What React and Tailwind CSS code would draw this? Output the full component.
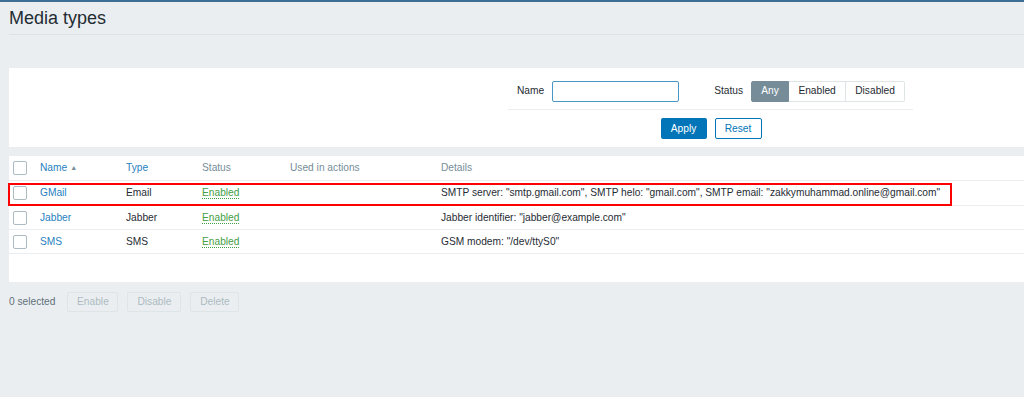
import React from 'react';

const rows = [
  { name: 'GMail', type: 'Email', details: 'SMTP server: "smtp.gmail.com", SMTP helo: "gmail.com", SMTP email: "zakkymuhammad.online@gmail.com"', h: 'h-[25px]' },
  { name: 'Jabber', type: 'Jabber', details: 'Jabber identifier: "jabber@example.com"', h: 'h-[24px]' },
  { name: 'SMS', type: 'SMS', details: 'GSM modem: "/dev/ttyS0"', h: 'h-[24px]' },
];

function Checkbox() {
  return <span className="block w-[14px] h-[14px] border border-[#acbbc2] rounded-[2px] bg-white" />;
}

export default function App() {
  return (
    <div className="min-h-[397px] bg-[#ebeef0] border-t-2 border-[#3f6e94] text-[10.2px] text-[#1f2c33] overflow-hidden" style={{ fontFamily: '"Liberation Sans", Arial, sans-serif' }}>
      {/* header */}
      <div className="pl-[9px]">
        <div className="h-[33px] flex items-center border-b border-[#dde2e5]">
          <h1 className="text-[18px] leading-none text-[#1f2c33]">Media types</h1>
        </div>
      </div>

      {/* filter */}
      <div className="ml-[9px] mt-[33px] bg-white h-[79px] pt-[12px]">
        <div className="ml-[499px] w-[405px]">
          <div className="flex items-center h-[22px] border-b border-[#ebeef0] box-content pb-[7px]">
            <span className="ml-[9px]">Name</span>
            <input className="ml-[8px] w-[127px] h-[21px] border border-[#4796c4] rounded-[2px] outline-none px-1" />
            <span className="ml-[35px]">Status</span>
            <div className="ml-[8px] flex h-[21px]">
              <span className="w-[38px] flex items-center justify-center bg-[#768d99] border border-[#768d99] text-white rounded-l-[2px]">Any</span>
              <span className="w-[57px] flex items-center justify-center border border-[#dfe4e7] border-l-0">Enabled</span>
              <span className="w-[59px] flex items-center justify-center border border-[#dfe4e7] border-l-0 rounded-r-[2px]">Disabled</span>
            </div>
          </div>
          <div className="flex justify-center gap-[8px] mt-[8px] pl-[1px]">
            <button className="w-[46px] h-[21px] bg-[#0275b8] text-white rounded-[2px]">Apply</button>
            <button className="w-[47px] h-[21px] border border-[#0275b8] text-[#0275b8] bg-white rounded-[2px]">Reset</button>
          </div>
        </div>
      </div>

      {/* table */}
      <div className="ml-[9px] mt-[9px] bg-white h-[126px] relative">
        <div className="flex items-center h-[25px] border-b border-[#ebeef0] text-[#768d99]">
          <div className="w-[31px] shrink-0 pl-[4px]"><Checkbox /></div>
          <div className="w-[86px] shrink-0 text-[#1f7fc0] flex items-center gap-[3px]">Name <span className="text-[7px] text-[#768d99]">▲</span></div>
          <div className="w-[76px] shrink-0 text-[#1f7fc0]">Type</div>
          <div className="w-[88px] shrink-0">Status</div>
          <div className="w-[151px] shrink-0">Used in actions</div>
          <div>Details</div>
        </div>
        {rows.map((r) => (
          <div key={r.name} className={`flex items-center ${r.h} border-b border-[#ebeef0]`}>
            <div className="w-[31px] shrink-0 pl-[4px]"><Checkbox /></div>
            <div className="w-[86px] shrink-0 text-[#1f7fc0]">{r.name}</div>
            <div className="w-[76px] shrink-0">{r.type}</div>
            <div className="w-[88px] shrink-0">
              <span className="text-[#429e47] border-b border-dotted border-[#429e47]">Enabled</span>
            </div>
            <div className="w-[151px] shrink-0" />
            <div className="whitespace-nowrap">{r.details}</div>
          </div>
        ))}
        <div className="absolute left-[-1px] top-[27px] w-[944px] h-[23px] border-2 border-[#ff0000] pointer-events-none" />
      </div>

      {/* footer */}
      <div className="ml-[9px] mt-[10px] flex items-center h-[19px]">
        <span className="text-[#5f717b]">0 selected</span>
        <div className="ml-[12px] flex gap-[9px] text-[#acbbc2]">
          <span className="w-[51px] h-[20px] flex items-center justify-center border border-[#dfe4e7] rounded-[2px]">Enable</span>
          <span className="w-[54px] h-[20px] flex items-center justify-center border border-[#dfe4e7] rounded-[2px]">Disable</span>
          <span className="w-[49px] h-[20px] flex items-center justify-center border border-[#dfe4e7] rounded-[2px]">Delete</span>
        </div>
      </div>
    </div>
  );
}
